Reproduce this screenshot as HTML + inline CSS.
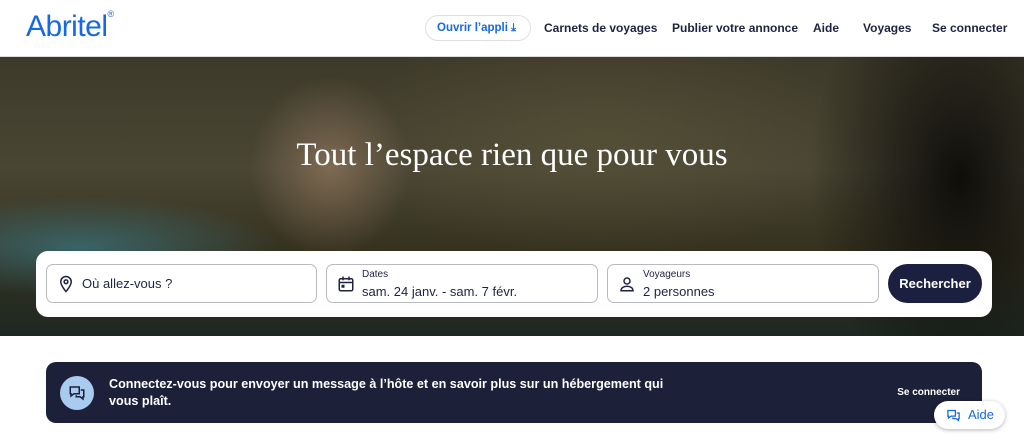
<!DOCTYPE html>
<html><head><meta charset="utf-8"><style>
*{box-sizing:border-box;margin:0;padding:0}
body{width:1024px;height:443px;overflow:hidden;background:#fff;font-family:"Liberation Sans",sans-serif;position:relative}
.hdr{height:57px;position:relative;border-bottom:1px solid #ddd}
.logo{position:absolute;left:26px;top:10px;font-size:30px;color:#1668e3;letter-spacing:-0.5px}
.logo sup{font-size:9px;position:relative;top:-8px}
.nav{position:absolute;top:21px;font-size:12px;font-weight:bold;color:#1f2340}
.app{position:absolute;left:425px;top:15px;width:106px;height:26px;border:1px solid #dfe0e4;border-radius:14px;color:#1668e3;font-size:11.5px;font-weight:bold;line-height:24px;padding-left:11px}
.hero{position:absolute;top:57px;left:0;width:1024px;height:279px;overflow:hidden;
background:
radial-gradient(ellipse 80px 90px at 330px 110px,rgba(190,150,120,.45),transparent),
radial-gradient(ellipse 200px 50px at 80px 190px,rgba(60,140,160,.55),transparent),
radial-gradient(ellipse 250px 120px at 600px 80px,rgba(100,95,60,.4),transparent),
radial-gradient(ellipse 150px 220px at 960px 120px,rgba(8,8,6,.9),transparent),
linear-gradient(180deg,#3e3a2a 0%,#4a4634 40%,#35311f 70%,#1e2822 100%)}
h1{position:absolute;top:80px;width:100%;text-align:center;font-family:"Liberation Serif",serif;font-weight:normal;font-size:33px;color:#fff}
.sb{position:absolute;left:36px;top:251px;width:956px;height:66px;background:#fff;border-radius:12px}
.f{position:absolute;top:13px;height:39px;border:1px solid #b9bac0;border-radius:7px;color:#1f2340}
.f .l{position:absolute;left:35px;top:4px;font-size:10px}
.f .v{position:absolute;left:35px;top:19px;font-size:13px}
.btn{position:absolute;left:852px;top:13px;width:94px;height:39px;background:#1b2040;border-radius:20px;color:#fff;font-size:13px;font-weight:bold;text-align:center;line-height:39px}
.ban{position:absolute;left:46px;top:362px;width:936px;height:61px;background:#1c2039;border-radius:10px;color:#fff}
.ic{position:absolute;left:14px;top:14px;width:34px;height:34px;border-radius:50%;background:#a9cbf0}
.msg{position:absolute;left:63px;top:14px;font-size:12.6px;font-weight:bold;line-height:17px}
.sc{position:absolute;right:22px;top:25px;font-size:10px;font-weight:bold}
.aide{position:absolute;left:934px;top:401px;width:71px;height:28px;background:#fff;border-radius:14px;box-shadow:0 1px 4px rgba(0,0,0,.3);color:#1668e3;font-size:13px;line-height:28px;padding-left:34px}
svg{position:absolute}
</style></head><body>
<div class="hdr">
<div class="logo">Abritel<sup>®</sup></div>
<div class="app">Ouvrir l’appli <span style="font-size:11px">⤓</span></div>
<div class="nav" style="left:544px">Carnets de voyages</div>
<div class="nav" style="left:672px">Publier votre annonce</div>
<div class="nav" style="left:813px">Aide</div>
<div class="nav" style="left:863px">Voyages</div>
<div class="nav" style="left:932px">Se connecter</div>
</div>
<div class="hero"><h1>Tout l’espace rien que pour vous</h1></div>
<div class="sb">
<div class="f" style="left:10px;width:271px"><svg style="left:10px;top:10px" width="18" height="18" viewBox="0 0 24 24"><path d="M12 2a7 7 0 0 0-7 7c0 5 7 13 7 13s7-8 7-13a7 7 0 0 0-7-7z" fill="none" stroke="#1f2340" stroke-width="2"/><circle cx="12" cy="9" r="2.5" fill="none" stroke="#1f2340" stroke-width="2"/></svg><div class="v" style="top:11px">Où allez-vous ?</div></div>
<div class="f" style="left:290px;width:272px"><svg style="left:10px;top:10px" width="18" height="18" viewBox="0 0 24 24"><rect x="3" y="5" width="18" height="16" rx="2" fill="none" stroke="#1f2340" stroke-width="2"/><path d="M3 10h18M8 2v5M16 2v5" stroke="#1f2340" stroke-width="2"/><rect x="6" y="13" width="4" height="4" fill="#1f2340"/></svg><div class="l">Dates</div><div class="v">sam. 24 janv. - sam. 7 févr.</div></div>
<div class="f" style="left:571px;width:272px"><svg style="left:10px;top:10px" width="18" height="18" viewBox="0 0 24 24"><circle cx="12" cy="8" r="4" fill="none" stroke="#1f2340" stroke-width="2"/><path d="M4 21c0-4 4-6 8-6s8 2 8 6z" fill="none" stroke="#1f2340" stroke-width="2"/></svg><div class="l">Voyageurs</div><div class="v">2 personnes</div></div>
<div class="btn">Rechercher</div>
</div>
<div class="ban"><div class="ic"><svg style="left:8px;top:8px" width="18" height="18" viewBox="0 0 24 24"><path d="M3 4h12v9H8l-4 3v-3H3zM17 8h4v9h-1v3l-4-3h-5v-2" fill="none" stroke="#1c2039" stroke-width="2"/></svg></div>
<div class="msg">Connectez-vous pour envoyer un message à l’hôte et en savoir plus sur un hébergement qui<br>vous plaît.</div>
<div class="sc">Se connecter</div></div>
<div class="aide"><svg style="left:12px;top:7px" width="15" height="15" viewBox="0 0 24 24"><path d="M3 4h12v9H8l-4 3v-3H3zM17 8h4v9h-1v3l-4-3h-5v-2" fill="none" stroke="#1668e3" stroke-width="2"/></svg>Aide</div>
</body></html>
